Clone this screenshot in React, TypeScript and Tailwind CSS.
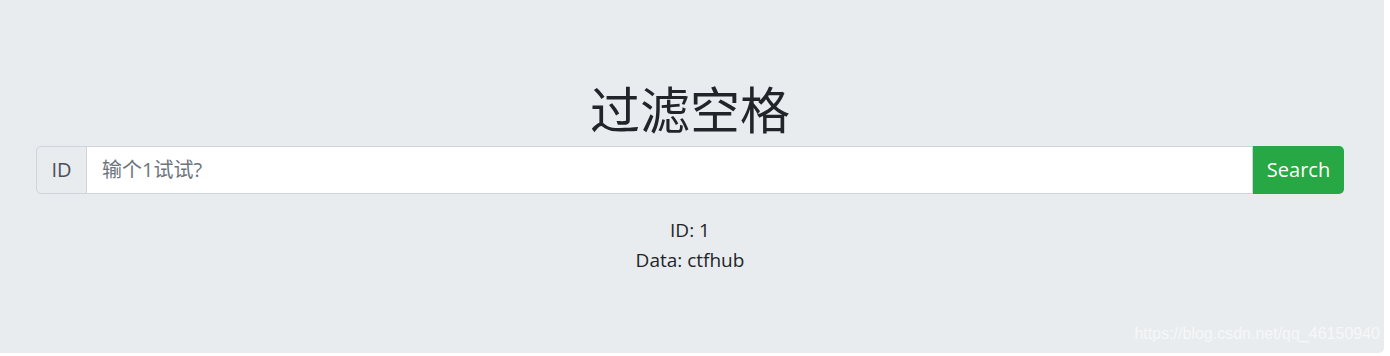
export default function App() {
  return (
    <div className="h-[356px] w-[1390px] bg-white font-['Open_Sans','Noto_Sans_CJK_SC',sans-serif]">
      <div className="relative h-[353px] w-[1384px] rounded-br-[5px] bg-[#e9ecef] pl-[36px] pr-[40px] pt-[80px]">
        <h1 className="h-[60px] text-center text-[50px] font-normal leading-[60px] text-[#212529]">
          过滤空格
        </h1>
        <div className="mt-[6px] flex h-[48px] text-[20px]">
          <span className="flex w-[51px] items-center justify-center rounded-l-[5px] border border-[#ced4da] bg-[#e9ecef] text-[#495057]">
            ID
          </span>
          <input
            className="min-w-0 flex-1 border-y border-r border-[#ced4da] bg-white px-[15px] text-[#495057] outline-none placeholder:text-[#6c757d]"
            placeholder="输个1试试?"
          />
          <button
            type="button"
            className="w-[91px] rounded-r-[5px] bg-[#28a745] text-white"
          >
            Search
          </button>
        </div>
        <div className="mt-[21px] text-center text-[19px] leading-[30px] text-[#212529]">
          <p>ID: 1</p>
          <p>Data: ctfhub</p>
        </div>
        <span className="absolute bottom-[7px] right-[4px] font-['Liberation_Sans',sans-serif] text-[16px] text-white/60">
          https://blog.csdn.net/qq_46150940
        </span>
      </div>
    </div>
  );
}
